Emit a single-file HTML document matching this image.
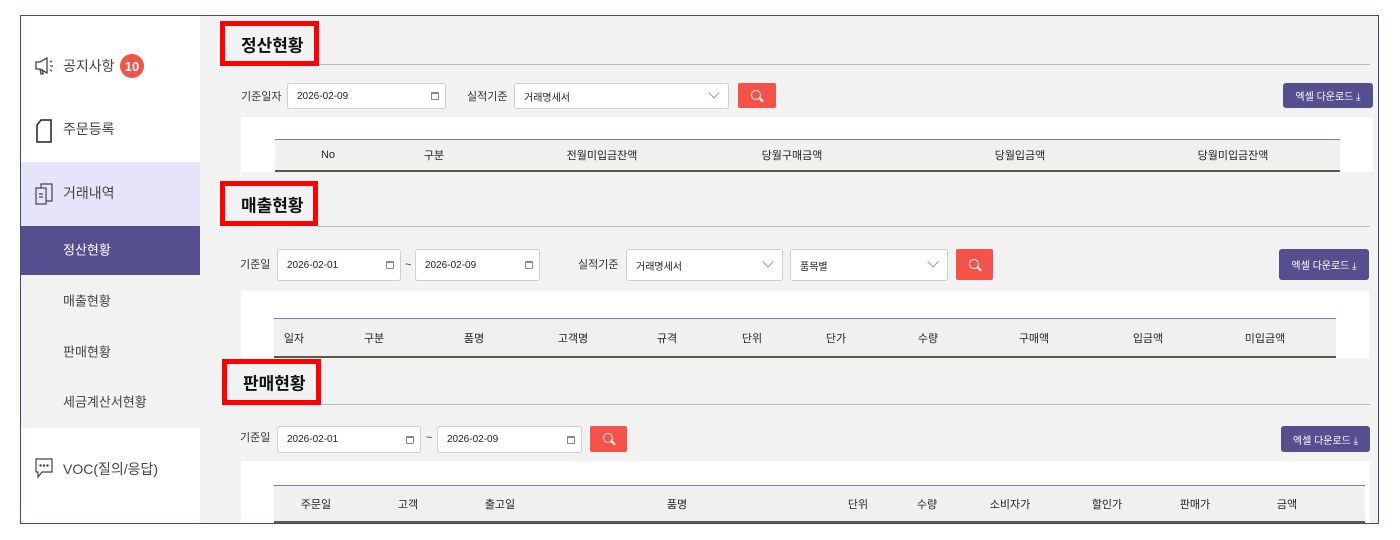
<!DOCTYPE html><html><head><meta charset="utf-8"><style>
*{margin:0;padding:0;box-sizing:border-box}
body{width:1400px;height:540px;background:#fff;position:relative;overflow:hidden;font-family:"Liberation Sans","Noto Sans CJK KR",sans-serif;color:#222}
.a{position:absolute}
.frame{left:20px;top:15px;width:1359px;height:509px;border:1px solid #3c4f7a;background:#f2f2f2}
.side{left:21px;top:16px;width:179px;height:507px;background:#fff}
.mi{position:absolute;left:63px;font-size:14px;color:#444;transform:translateY(-50%)}
.si{position:absolute;left:63px;font-size:13px;color:#444;transform:translateY(-50%)}
.rb{border:5px solid #f00}
.rb span{position:absolute;left:16px;top:50%;transform:translateY(-50%);font-size:17px;font-weight:bold;color:#111}
.hl{height:1px;background:#bcbcbc}
.lbl{font-size:11px;color:#333;transform:translateY(-50%)}
.inp{background:#fff;border:1px solid #cfcfcf;border-radius:3px;font-size:10px;color:#222;padding-left:9px;display:flex;align-items:center}
.cal{position:absolute;right:6px;top:50%;width:8px;height:8px;margin-top:-4px;border:1px solid #888;border-radius:1px;border-top-width:2px}
.chev{position:absolute;right:10px;top:50%;width:8px;height:8px;margin-top:-7px;border-right:1px solid #999;border-bottom:1px solid #999;transform:rotate(45deg)}
.sb{background:#f5524a;border-radius:2px}
.sb i{position:absolute;left:50%;top:50%;width:10px;height:10px;margin:-6px 0 0 -6px;border:1.6px solid #fff;border-radius:50%}
.sb b{position:absolute;left:50%;top:50%;width:5px;height:1.6px;margin:3px 0 0 2px;background:#fff;transform:rotate(45deg)}
.xb{background:#554e8f;border-radius:3px;color:#fff;font-size:10px;display:flex;align-items:center;justify-content:center}
.pn{background:#fff}
.th{background:#f0f0f0;border-top:1px solid #7d74b8;border-bottom:2px solid #5c5a45}
.th span{position:absolute;top:50%;transform:translate(-50%,-50%);font-size:11px;color:#222;white-space:nowrap}
</style></head><body>
<div class="a frame"></div>
<div class="a side"></div>
<div class="a" style="left:21px;top:162px;width:179px;height:64px;background:#e6e4fa"></div>
<div class="a" style="left:21px;top:226px;width:179px;height:49px;background:#554e8f"></div>
<div class="a" style="left:21px;top:275px;width:179px;height:153px;background:#f2f2f2"></div>
<svg class="a" style="left:34px;top:55px" width="22" height="22" viewBox="0 0 22 22" fill="none" stroke="#444" stroke-width="1.3"><path d="M2 7h4l7-4v15l-7-4H2z M6 14l1 5h2l-1-5"/><path d="M16 7l2-1M16 11h3M16 15l2 1"/></svg>
<div class="mi" style="top:66px">공지사항</div>
<div class="a" style="left:120px;top:54px;width:24px;height:24px;border-radius:50%;background:#f0554a;color:#fff;font-size:13px;display:flex;align-items:center;justify-content:center;font-weight:bold">10</div>
<svg class="a" style="left:36px;top:119px" width="16" height="24" viewBox="0 0 16 24" fill="none" stroke="#222" stroke-width="1.5"><path d="M5 1h10v22H1V6z"/></svg>
<div class="mi" style="top:129px">주문등록</div>
<svg class="a" style="left:35px;top:182px" width="20" height="24" viewBox="0 0 20 24" fill="none" stroke="#444" stroke-width="1.2"><rect x="1" y="6" width="10" height="16"/><path d="M6 6V2h11v17h-6"/><path d="M4 12h4M4 15h4"/></svg>
<div class="mi" style="top:193px">거래내역</div>
<div class="si" style="top:249px;color:#fff">정산현황</div>
<div class="si" style="top:300px">매출현황</div>
<div class="si" style="top:351px">판매현황</div>
<div class="si" style="top:401px">세금계산서현황</div>
<svg class="a" style="left:35px;top:458px" width="18" height="22" viewBox="0 0 18 22" fill="none" stroke="#444" stroke-width="1.2"><path d="M1 1h16v13H7l-4 5v-5H1z"/><circle cx="5.5" cy="7.5" r=".6" fill="#444"/><circle cx="9" cy="7.5" r=".6" fill="#444"/><circle cx="12.5" cy="7.5" r=".6" fill="#444"/></svg>
<div class="mi" style="top:469px">VOC(질의/응답)</div>

<div class="a hl" style="left:319px;top:64px;width:1051px"></div>
<div class="a rb" style="left:220px;top:21px;width:99px;height:45px"><span>정산현황</span></div>
<div class="a lbl" style="left:241px;top:96px">기준일자</div>
<div class="a inp" style="left:287px;top:83px;width:159px;height:26px">2026-02-09<i class="cal"></i></div>
<div class="a lbl" style="left:467px;top:96px">실적기준</div>
<div class="a inp" style="left:514px;top:83px;width:215px;height:26px">거래명세서<i class="chev"></i></div>
<div class="a sb" style="left:738px;top:83px;width:38px;height:25px"><i></i><b></b></div>
<div class="a xb" style="left:1283px;top:83px;width:90px;height:25px">엑셀 다운로드 ⤓</div>
<div class="a pn" style="left:241px;top:117px;width:1132px;height:55px"></div>
<div class="a th" style="left:275px;top:139px;width:1065px;height:33px">
<span style="left:53px">No</span><span style="left:159px">구분</span><span style="left:327px">전월미입금잔액</span><span style="left:517px">당월구매금액</span><span style="left:745px">당월입금액</span><span style="left:958px">당월미입금잔액</span></div>

<div class="a hl" style="left:318px;top:226px;width:1052px"></div>
<div class="a rb" style="left:220px;top:181px;width:98px;height:45px"><span>매출현황</span></div>
<div class="a lbl" style="left:240px;top:264px">기준일</div>
<div class="a inp" style="left:277px;top:249px;width:124px;height:32px">2026-02-01<i class="cal"></i></div>
<div class="a lbl" style="left:405px;top:265px">~</div>
<div class="a inp" style="left:415px;top:249px;width:125px;height:32px">2026-02-09<i class="cal"></i></div>
<div class="a lbl" style="left:578px;top:264px">실적기준</div>
<div class="a inp" style="left:626px;top:249px;width:157px;height:32px">거래명세서<i class="chev"></i></div>
<div class="a inp" style="left:790px;top:249px;width:158px;height:32px">품목별<i class="chev"></i></div>
<div class="a sb" style="left:956px;top:249px;width:37px;height:31px"><i></i><b></b></div>
<div class="a xb" style="left:1279px;top:249px;width:90px;height:31px">엑셀 다운로드 ⤓</div>
<div class="a pn" style="left:241px;top:291px;width:1128px;height:67px"></div>
<div class="a th" style="left:274px;top:318px;width:1062px;height:40px">
<span style="left:20px">일자</span><span style="left:100px">구분</span><span style="left:200px">품명</span><span style="left:299px">고객명</span><span style="left:393px">규격</span><span style="left:478px">단위</span><span style="left:562px">단가</span><span style="left:654px">수량</span><span style="left:760px">구매액</span><span style="left:874px">입금액</span><span style="left:991px">미입금액</span></div>

<div class="a hl" style="left:321px;top:404px;width:1049px"></div>
<div class="a rb" style="left:222px;top:359px;width:99px;height:46px"><span>판매현황</span></div>
<div class="a lbl" style="left:240px;top:437px">기준일</div>
<div class="a inp" style="left:277px;top:426px;width:144px;height:27px">2026-02-01<i class="cal"></i></div>
<div class="a lbl" style="left:426px;top:438px">~</div>
<div class="a inp" style="left:437px;top:426px;width:145px;height:27px">2026-02-09<i class="cal"></i></div>
<div class="a sb" style="left:590px;top:426px;width:37px;height:26px"><i></i><b></b></div>
<div class="a xb" style="left:1281px;top:426px;width:89px;height:26px">엑셀 다운로드 ⤓</div>
<div class="a pn" style="left:241px;top:461px;width:1129px;height:62px"></div>
<div class="a th" style="left:274px;top:485px;width:1091px;height:38px">
<span style="left:42px">주문일</span><span style="left:134px">고객</span><span style="left:226px">출고일</span><span style="left:403px">품명</span><span style="left:584px">단위</span><span style="left:653px">수량</span><span style="left:736px">소비자가</span><span style="left:833px">할인가</span><span style="left:921px">판매가</span><span style="left:1013px">금액</span></div>
</body></html>
